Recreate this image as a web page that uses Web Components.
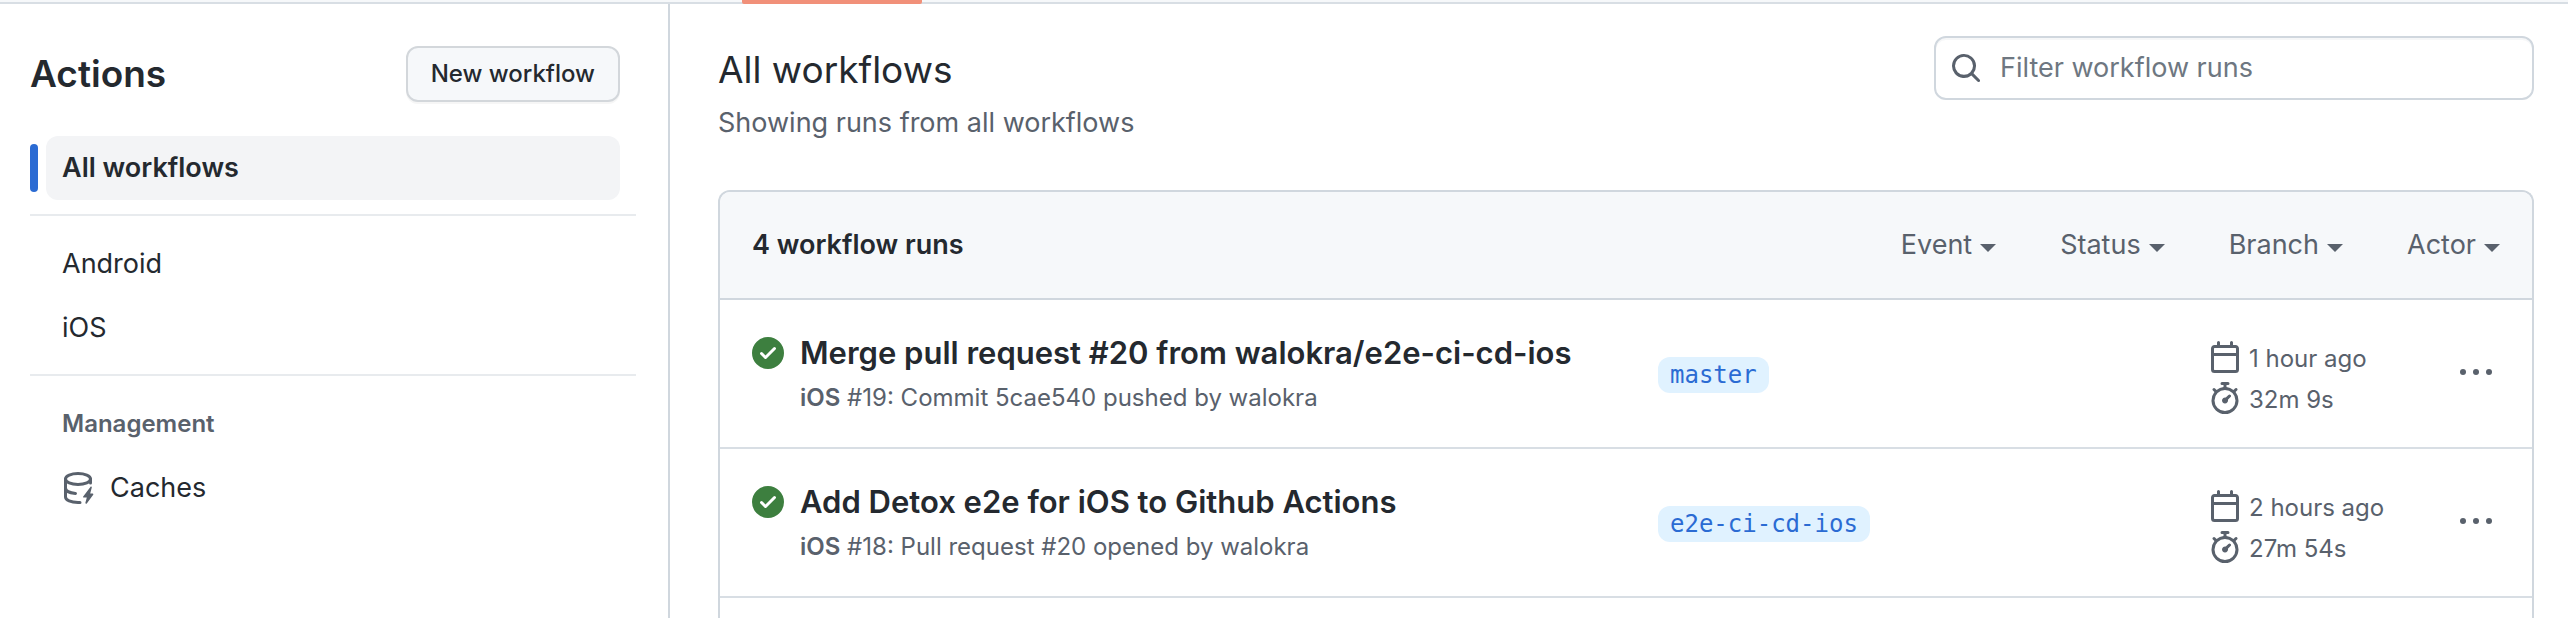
<!DOCTYPE html>
<html lang="en">
<head>
<meta charset="utf-8">
<title>Actions</title>
<style>
  :root {
    --fg: #24292f;
    --muted: #59616c;
    --line: #d0d7de;
    --line-soft: #d8dee4;
    --subtle: #f6f8fa;
    --accent: #2b6bd3;
    --body: 27px;
    --small: 24px;
    --title: 37px;
  }
  body {
    margin: 0;
    background: #fff;
    color: var(--fg);
    font: 400 27px/42px Inter, "Liberation Sans", sans-serif;
  }
</style>
</head>
<body>
<actions-page>
  <actions-sidebar slot="sidebar">
    <nav-item current href="#all">All workflows</nav-item>
    <nav-divider></nav-divider>
    <nav-item href="#android">Android</nav-item>
    <nav-item href="#ios">iOS</nav-item>
    <nav-divider></nav-divider>
    <nav-heading>Management</nav-heading>
    <nav-item href="#caches"><ui-icon slot="icon" name="cache"></ui-icon>Caches</nav-item>
  </actions-sidebar>
  <page-head>
    <span slot="title">All workflows</span>
    <span slot="note">Showing runs from all workflows</span>
  </page-head>
  <run-list>
    <span slot="count">4 workflow runs</span>
    <filter-menu slot="filter">Event</filter-menu>
    <filter-menu slot="filter">Status</filter-menu>
    <filter-menu slot="filter">Branch</filter-menu>
    <filter-menu slot="filter">Actor</filter-menu>
    <run-row branch="master" when="1 hour ago" took="32m 9s">
      <span slot="title">Merge pull request #20 from walokra/e2e-ci-cd-ios</span>
      <b slot="workflow">iOS</b> #19: Commit 5cae540 pushed by walokra
    </run-row>
    <run-row branch="e2e-ci-cd-ios" when="2 hours ago" took="27m 54s">
      <span slot="title">Add Detox e2e for iOS to Github Actions</span>
      <b slot="workflow">iOS</b> #18: Pull request #20 opened by walokra
    </run-row>
  </run-list>
</actions-page>

<script>
const define = (name, html, setup) => {
  const template = document.createElement('template');
  template.innerHTML = html;
  customElements.define(name, class extends HTMLElement {
    connectedCallback() {
      if (this.shadowRoot) return;
      const root = this.attachShadow({ mode: 'open' });
      root.append(template.content.cloneNode(true));
      if (setup) setup(this, root);
    }
  });
};

const ICONS = {
  search: '<path d="M10.68 11.74a6 6 0 0 1-7.922-8.982 6 6 0 0 1 8.982 7.922l3.04 3.04a.749.749 0 0 1-.326 1.275.749.749 0 0 1-.734-.215ZM11.5 7a4.499 4.499 0 1 0-8.997 0A4.499 4.499 0 0 0 11.5 7Z"/>',
  success: '<path d="M8 16A8 8 0 1 1 8 0a8 8 0 0 1 0 16Zm3.78-9.72a.751.751 0 0 0-.018-1.042.751.751 0 0 0-1.042-.018L6.75 9.19 5.28 7.72a.751.751 0 0 0-1.042.018.751.751 0 0 0-.018 1.042l2 2a.75.75 0 0 0 1.06 0Z"/>',
  calendar: '<path d="M4.75 0a.75.75 0 0 1 .75.75V2h5V.75a.75.75 0 0 1 1.5 0V2h1.25c.966 0 1.75.784 1.75 1.75v10.5A1.75 1.75 0 0 1 13.25 16H2.75A1.75 1.75 0 0 1 1 14.25V3.75C1 2.784 1.784 2 2.75 2H4V.75A.75.75 0 0 1 4.75 0ZM2.5 7.5v6.75c0 .138.112.25.25.25h10.5a.25.25 0 0 0 .25-.25V7.5Zm10.75-4H2.75a.25.25 0 0 0-.25.25V6h11V3.75a.25.25 0 0 0-.25-.25Z"/>',
  stopwatch: '<path d="M5.75.75A.75.75 0 0 1 6.5 0h3a.75.75 0 0 1 0 1.5h-.75v1l-.001.041a6.724 6.724 0 0 1 3.464 1.435l.007-.006.75-.75a.749.749 0 0 1 1.275.326.749.749 0 0 1-.215.734l-.75.75-.006.007a6.75 6.75 0 1 1-10.548 0L2.72 5.03l-.75-.75a.751.751 0 0 1 .018-1.042.751.751 0 0 1 1.042-.018l.75.75.007.006A6.72 6.72 0 0 1 7.25 2.541V1.5H6.5a.75.75 0 0 1-.75-.75ZM8 14.5a5.25 5.25 0 1 0-.001-10.501A5.25 5.25 0 0 0 8 14.5Zm.389-6.7 1.33-1.33a.75.75 0 1 1 1.061 1.06L9.45 8.861A1.503 1.503 0 0 1 8 10.75a1.499 1.499 0 1 1 .389-2.95Z"/>',
  kebab: '<circle cx="1.5" cy="8" r="1.5"/><circle cx="8" cy="8" r="1.5"/><circle cx="14.5" cy="8" r="1.5"/>',
  cache: '<g fill="none" stroke="currentColor" stroke-width="1.5" stroke-linecap="round"><ellipse cx="8" cy="3.5" rx="6.25" ry="2.75"/><path d="M1.75 3.5v9c0 1.6 2.7 2.7 6.25 2.75h1M1.75 8c0 1.4 2 2.5 5 2.7M14.25 3.5v2"/></g><path d="M14.2 7.5 10.6 12.2c-.2.3 0 .6.3.6h1.5l-.7 2.6c-.1.4.4.7.7.3l3.2-4.3c.2-.3 0-.6-.3-.6h-1.200l.8-3c.1-.5-.4-.7-.7-.3Z"/>'
};

define('ui-icon', `
  <style>
    :host { display: block; flex: none; width: 32px; height: 32px; }
    svg { display: block; width: 100%; height: 100%; fill: currentColor; }
  </style>
  <svg viewBox="0 0 16 16" aria-hidden="true"></svg>`,
  (el, root) => { root.querySelector('svg').innerHTML = ICONS[el.getAttribute('name')]; });

define('actions-page', `
  <style>
    :host { display: flex; flex-direction: column; min-height: 100vh; }
    .tabs { display: flex; height: 4px; box-sizing: border-box; background: var(--subtle); border-bottom: 2px solid var(--line-soft); }
    .tab { width: 180px; height: 4px; margin-left: 742px; background: #f19079; border-radius: 0 0 2px 2px; }
    .body { display: flex; flex: 1; }
    main { display: flex; flex: 1; min-width: 0; flex-direction: column; padding: 32px 34px 0 48px; }
  </style>
  <div class="tabs"><div class="tab"></div></div>
  <div class="body">
    <slot name="sidebar"></slot>
    <main><slot></slot></main>
  </div>`);

define('actions-sidebar', `
  <style>
    :host { display: block; flex: none; box-sizing: border-box; width: 670px; padding: 42px 32px 0 30px; border-right: 2px solid var(--line); }
    header { display: flex; align-items: center; justify-content: space-between; margin: 0 16px 34px 0; }
    h2 { margin: 0; font-size: var(--title); font-weight: 600; line-height: 56px; }
    button { height: 56px; padding: 0 23px; border: 2px solid #d3d7db; border-radius: 12px; background: var(--subtle);
      box-shadow: 0 2px 0 rgba(27, 31, 36, .04); color: inherit; font: 500 var(--small)/36px Inter, "Liberation Sans", sans-serif; }
  </style>
  <header><h2>Actions</h2><button type="button">New workflow</button></header>
  <nav aria-label="Workflows"><slot></slot></nav>`);

define('nav-item', `
  <style>
    :host { display: flex; align-items: center; gap: 8px; margin-right: 16px; }
    .bar { width: 8px; height: 48px; border-radius: 4px; }
    a { display: flex; flex: 1; align-items: center; gap: 16px; height: 64px; padding: 0 16px; border-radius: 12px; color: inherit; font-size: var(--body); text-decoration: none; }
    ::slotted(ui-icon) { color: var(--muted); }
    :host([current]) .bar { background: var(--accent); }
    :host([current]) a { background: #f3f4f6; font-weight: 600; }
  </style>
  <span class="bar"></span><a><slot name="icon"></slot><span><slot></slot></span></a>`,
  (el, root) => { root.querySelector('a').href = el.getAttribute('href'); });

define('nav-divider', `
  <style>:host { display: block; height: 2px; margin: 14px 0 16px; background: #e8ebee; }</style>`);

define('nav-heading', `
  <style>
    :host { display: block; padding: 14px 32px; }
    h3 { margin: 0; color: var(--muted); font-size: var(--small); font-weight: 600; line-height: 36px; }
  </style>
  <h3><slot></slot></h3>`);

define('page-head', `
  <style>
    :host { display: flex; align-items: flex-start; justify-content: space-between; margin-bottom: 48px; }
    h1 { margin: 0; font-size: var(--title); font-weight: 400; line-height: 68px; }
    p { margin: 0; color: var(--muted); font-size: var(--body); line-height: 38px; }
    label { display: flex; align-items: center; gap: 18px; box-sizing: border-box; width: 600px; height: 64px; padding: 0 14px;
      border: 2px solid var(--line); border-radius: 12px; box-shadow: inset 0 2px 0 rgba(208, 215, 222, .2); color: var(--muted); }
    input { flex: 1; min-width: 0; padding: 0; border: 0; outline: 0; background: none; color: var(--fg); font: 400 var(--body)/42px Inter, "Liberation Sans", sans-serif; }
    input::placeholder { color: #6e7781; opacity: 1; }
  </style>
  <div><h1><slot name="title"></slot></h1><p><slot name="note"></slot></p></div>
  <label><ui-icon name="search"></ui-icon><input type="text" placeholder="Filter workflow runs" aria-label="Filter workflow runs"></label>`);

define('run-list', `
  <style>
    :host { display: block; flex: 1; border: 2px solid var(--line); border-bottom: 0; border-radius: 12px 12px 0 0; }
    header { display: flex; align-items: center; gap: 64px; height: 106px; padding: 0 32px; border-bottom: 2px solid var(--line); border-radius: 10px 10px 0 0; background: var(--subtle); }
    strong { margin-right: auto; font-size: var(--body); font-weight: 600; }
  </style>
  <header><strong><slot name="count"></slot></strong><slot name="filter"></slot></header>
  <slot></slot>`);

define('filter-menu', `
  <style>
    :host { display: block; }
    button { display: flex; align-items: center; gap: 8px; padding: 0; border: 0; background: none; color: var(--muted); font: 400 var(--body)/42px Inter, "Liberation Sans", sans-serif; }
    .caret { margin-top: 6px; border: 8px solid transparent; border-top-color: currentColor; border-bottom: 0; }
  </style>
  <button type="button" aria-haspopup="true"><slot></slot><span class="caret"></span></button>`);

define('run-row', `
  <style>
    :host { display: grid; grid-template-columns: minmax(0, 1fr) 551px 251px 40px; align-items: center; padding: 30px 32px 29px; border-bottom: 2px solid var(--line-soft); color: var(--muted); font-size: var(--small); line-height: 36px; }
    .run { display: grid; grid-template-columns: 32px minmax(0, 1fr); align-items: center; gap: 7px 16px; }
    .run ui-icon { color: #3d7f3f; }
    h3 { margin: 0; font-size: 31px; font-weight: 600; line-height: 40px; }
    h3 a { color: var(--fg); text-decoration: none; }
    p { grid-column: 2; margin: 0; }
    ::slotted(b) { font-weight: 600; }
    .branch { padding-top: 2px; }
    .branch a { display: inline-block; padding: 0 12px; border-radius: 12px; background: #e0f2ff; color: var(--accent); font-family: "DejaVu Sans Mono", monospace; text-decoration: none; vertical-align: top; }
    .meta { padding-top: 6px; }
    .meta div { display: flex; align-items: center; gap: 8px; height: 41px; }
    .meta span { padding-top: 4px; }
    button { width: 32px; padding: 0 0 4px; border: 0; background: none; color: inherit; }
  </style>
  <div class="run">
    <ui-icon name="success"></ui-icon>
    <h3><a href="#run"><slot name="title"></slot></a></h3>
    <p><slot name="workflow"></slot> <slot></slot></p>
  </div>
  <div class="branch"><a href="#branch"></a></div>
  <div class="meta">
    <div><ui-icon name="calendar"></ui-icon><span class="when"></span></div>
    <div><ui-icon name="stopwatch"></ui-icon><span class="took"></span></div>
  </div>
  <button type="button" aria-label="Show options"><ui-icon name="kebab"></ui-icon></button>`,
  (el, root) => {
    root.querySelector('.branch a').textContent = el.getAttribute('branch');
    root.querySelector('.when').textContent = el.getAttribute('when');
    root.querySelector('.took').textContent = el.getAttribute('took');
  });
</script>
</body>
</html>
